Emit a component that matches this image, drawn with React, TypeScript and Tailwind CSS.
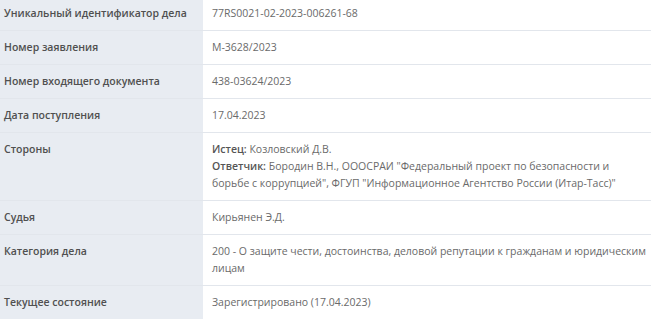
const rows: { label: string; value: React.ReactNode }[] = [
  { label: 'Уникальный идентификатор дела', value: '77RS0021-02-2023-006261-68' },
  { label: 'Номер заявления', value: 'М-3628/2023' },
  { label: 'Номер входящего документа', value: '438-03624/2023' },
  { label: 'Дата поступления', value: '17.04.2023' },
  {
    label: 'Стороны',
    value: (
      <>
        <div>
          <b className="font-semibold text-[#555]">Истец:</b> Козловский Д.В.
        </div>
        <div>
          <b className="font-semibold text-[#555]">Ответчик:</b> Бородин В.Н., ОООСРАИ "Федеральный проект по безопасности и
          <br />
          борьбе с коррупцией", ФГУП "Информационное Агентство России (Итар-Тасс)"
        </div>
      </>
    ),
  },
  { label: 'Судья', value: 'Кирьянен Э.Д.' },
  {
    label: 'Категория дела',
    value: (
      <>
        200 - О защите чести, достоинства, деловой репутации к гражданам и юридическим
        <br />
        лицам
      </>
    ),
  },
  { label: 'Текущее состояние', value: 'Зарегистрировано (17.04.2023)' },
]

export default function App() {
  return (
    <div className="w-[651px] h-[319px] overflow-hidden bg-white font-['Open_Sans',sans-serif] text-[10.5px] leading-[17px]">
      <div className="-mt-[3px]">
        {rows.map((r, i) => (
          <div key={i} className="grid grid-cols-[203px_1fr] border-b border-[#e2e6ec]">
            <div className="bg-[#e8ecf2] pl-[4px] pr-1 py-[8px] font-semibold text-[#505050] whitespace-nowrap">
              {r.label}
            </div>
            <div className="pl-[9px] pr-1 py-[8px] text-[#6a6a6a] whitespace-nowrap">{r.value}</div>
          </div>
        ))}
      </div>
    </div>
  )
}
